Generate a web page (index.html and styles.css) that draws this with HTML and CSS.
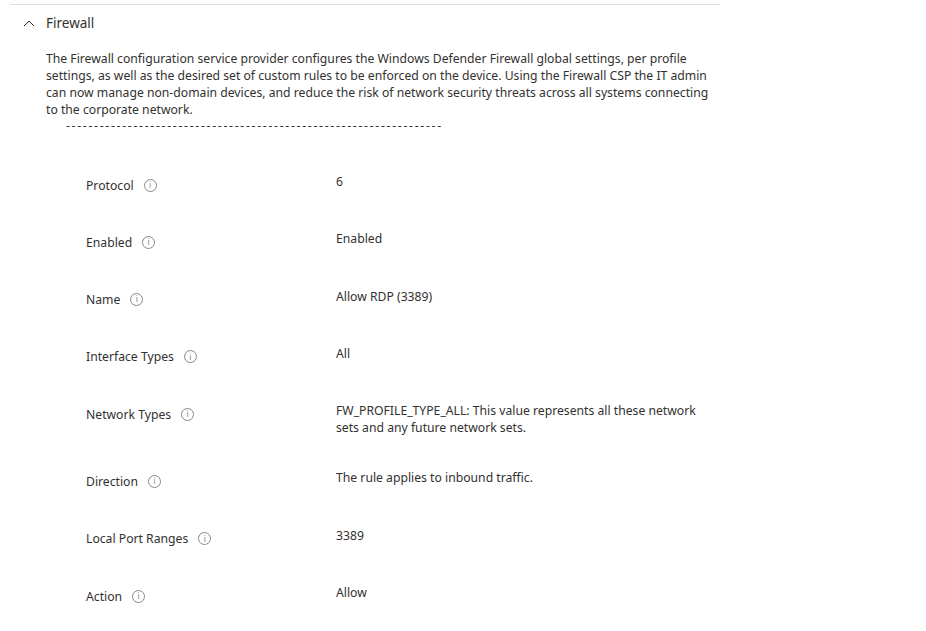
FILE: index.html
```html
<!DOCTYPE html>
<html lang="en">
<head>
    <meta charset="UTF-8">
    <meta name="viewport" content="width=device-width, initial-scale=1.0">
    <title>Firewall</title>
    <link rel="stylesheet" href="styles.css">
</head>
<body>
    <div class="section">
        <div class="section-header">
            <svg class="chevron" width="12" height="8" viewBox="0 0 12 8">
                <path d="M1 7 L6 2 L11 7" fill="none" stroke="#323130" stroke-width="1"/>
            </svg>
            <span class="section-title">Firewall</span>
        </div>

        <div class="section-body">
            <p class="description">The Firewall configuration service provider configures the Windows Defender Firewall global settings, per profile settings, as well as the desired set of custom rules to be enforced on the device. Using the Firewall CSP the IT admin can now manage non-domain devices, and reduce the risk of network security threats across all systems connecting to the corporate network.</p>
            <div class="divider">-------------------------------------------------------------------</div>

            <div class="settings">
                <div class="setting-row">
                    <div class="setting-label">Protocol <span class="info">i</span></div>
                    <div class="setting-value">6</div>
                </div>
                <div class="setting-row">
                    <div class="setting-label">Enabled <span class="info">i</span></div>
                    <div class="setting-value">Enabled</div>
                </div>
                <div class="setting-row">
                    <div class="setting-label">Name <span class="info">i</span></div>
                    <div class="setting-value">Allow RDP (3389)</div>
                </div>
                <div class="setting-row">
                    <div class="setting-label">Interface Types <span class="info">i</span></div>
                    <div class="setting-value">All</div>
                </div>
                <div class="setting-row">
                    <div class="setting-label">Network Types <span class="info">i</span></div>
                    <div class="setting-value">FW_PROFILE_TYPE_ALL: This value represents all these network sets and any future network sets.</div>
                </div>
                <div class="setting-row">
                    <div class="setting-label">Direction <span class="info">i</span></div>
                    <div class="setting-value">The rule applies to inbound traffic.</div>
                </div>
                <div class="setting-row">
                    <div class="setting-label">Local Port Ranges <span class="info">i</span></div>
                    <div class="setting-value">3389</div>
                </div>
                <div class="setting-row">
                    <div class="setting-label">Action <span class="info">i</span></div>
                    <div class="setting-value">Allow</div>
                </div>
            </div>
        </div>
    </div>
</body>
</html>
```

FILE: styles.css
```css
* {
    margin: 0;
    padding: 0;
    box-sizing: border-box;
}

body {
    font-family: "Noto Sans", "Open Sans", sans-serif;
    font-size: 12.2px;
    color: #323130;
    background: #ffffff;
    padding: 4px 0 0 10px;
}

.section {
    width: 710px;
    border-top: 1px solid #e1dfdd;
}

.section-header {
    display: flex;
    align-items: center;
    height: 35px;
    padding-left: 13px;
}

.chevron {
    margin-right: 11px;
}

.section-title {
    font-size: 13.5px;
}

.section-body {
    padding: 10px 0 0 36px;
}

.description {
    line-height: 17px;
    width: 668px;
}

.divider {
    margin-left: 20px;
    line-height: 16px;
    white-space: nowrap;
    letter-spacing: 1.7px;
}

.settings {
    padding: 39px 0 0 40px;
    display: flex;
    flex-direction: column;
    gap: 33.3px;
}

.setting-row {
    display: flex;
    align-items: flex-start;
}

.setting-label {
    width: 250px;
    height: 24px;
    display: flex;
    align-items: center;
    gap: 10px;
}

.setting-value {
    width: 366px;
    line-height: 17px;
}

.info {
    display: inline-flex;
    align-items: center;
    justify-content: center;
    width: 13px;
    height: 13px;
    border: 1px solid #8a8886;
    border-radius: 50%;
    font-size: 8.5px;
    color: #8a8886;
    line-height: 1;
}
```
